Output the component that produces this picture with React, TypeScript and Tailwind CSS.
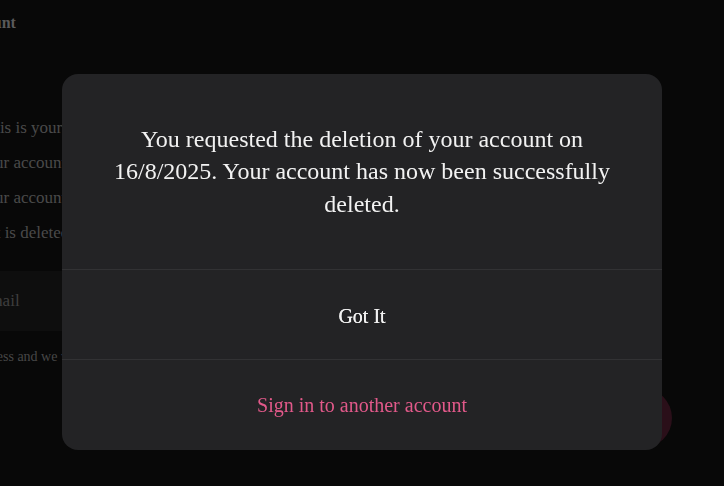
import React from 'react';

const serif = { fontFamily: '"Liberation Serif", "Times New Roman", serif' };

function AccountPage() {
  return (
    <div className="min-h-[486px] bg-[#080808] overflow-hidden" style={serif}>
      <div className="-ml-[24px] w-[800px]">
        <h1 className="pt-[11px] -ml-[17px] text-[16px] font-bold text-[#5a5a5a]">Account</h1>
        <div className="mt-[82px] flex flex-col gap-[14px] text-[17px] text-[#4a4a4a]">
          <p className="leading-[21px] ml-[5px]">This is your last chance to keep your data.</p>
          <p className="leading-[21px]">Your account will be deactivated first.</p>
          <p className="leading-[21px]">Your account data will be removed later.</p>
          <p className="leading-[21px] ml-[14px]">It is deleted after thirty days.</p>
        </div>
        <div className="mt-[28px] w-[620px] h-[60px] flex items-center bg-[#0e0e0e] pl-[3px] text-[17px] text-[#3e3e3e]">
          Email
        </div>
        <p className="mt-[15px] -ml-[8px] text-[14px] text-[#474747]">Address and we will send a link.</p>
      </div>
      <div className="absolute left-[612px] top-[388px] w-[60px] h-[60px] rounded-full bg-[#2a0f19]" />
    </div>
  );
}

function DeletedDialog() {
  return (
    <div className="fixed inset-0 flex justify-center pt-[74px]" style={serif}>
      <div className="w-[600px] h-[376px] rounded-[16px] bg-[#232325] flex flex-col overflow-hidden">
        <div className="h-[196px] px-[48px] flex items-center justify-center border-b border-[#323234]">
          <p className="text-center text-[24px] leading-[32.5px] text-[#f2f2f2]">
            You requested the deletion of your account on 16/8/2025. Your account has now been successfully deleted.
          </p>
        </div>
        <button className="h-[90px] shrink-0 pt-[2px] border-b border-[#323234] text-[20px] font-medium text-[#f2f2f2] [text-shadow:0_0_0.6px_#f2f2f2]">
          Got It
        </button>
        <button className="flex-1 text-[20px] text-[#e2598a]">Sign in to another account</button>
      </div>
    </div>
  );
}

export default function App() {
  return (
    <div className="relative">
      <AccountPage />
      <DeletedDialog />
    </div>
  );
}
